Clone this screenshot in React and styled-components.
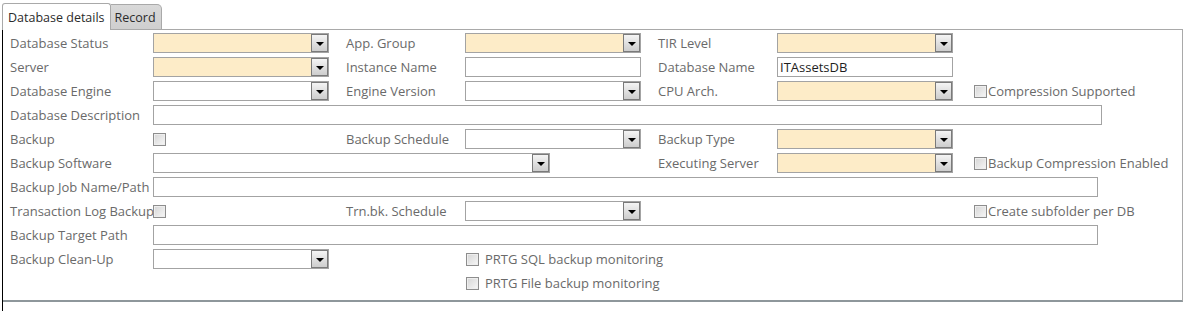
import React from 'react';
import styled, { createGlobalStyle, css } from 'styled-components';

const colors = {
  label: '#6a6a6a',
  text: '#1e1e1e',
  fieldBorder: '#a3a3a3',
  required: '#fdecc8',
  tabBorder: '#a9a9a9',
  panelLine: '#8e979b',
};

const GlobalStyle = createGlobalStyle`
  html, body {
    margin: 0;
    padding: 0;
    background: #fff;
  }
  body {
    font-family: 'Open Sans', 'Noto Sans', sans-serif;
    font-size: 13px;
  }
`;

const Page = styled.div`
  width: 1187px;
  height: 311px;
  overflow: hidden;
  background: #fff;
`;

const TabStrip = styled.div`
  display: flex;
  align-items: flex-end;
  height: 30px;
  margin-left: 2px;
  width: 1181px;
`;

const Tab = styled.div`
  box-sizing: border-box;
  height: 27px;
  padding: 0 5px;
  display: flex;
  align-items: center;
  font-size: 12.5px;
  color: #2b2b2b;
  border: 1px solid ${colors.tabBorder};
  border-bottom: none;
  border-radius: 3px 3px 0 0;
  background: #fff;

  ${props => !props.$active && css`
    height: 26px;
    border-bottom: 1px solid ${colors.tabBorder};
    background: linear-gradient(#d9d9d9, #cfcfcf);
    border-left: none;
    border-radius: 0 5px 0 0;
    padding: 0 5px 0 4px;
  `}
`;

const TabFiller = styled.div`
  flex: 1;
  height: 1px;
  background: ${colors.tabBorder};
`;

const Body = styled.div`
  margin-left: 2px;
  height: 281px;
  border-left: 1px solid #000;
`;

const Panel = styled.div`
  box-sizing: border-box;
  width: 1180px;
  height: 272px;
  border-right: 1px solid ${colors.tabBorder};
  border-bottom: 2px solid ${colors.panelLine};
  padding: 3px 0 0 7px;
`;

const Form = styled.div`
  display: grid;
  grid-template-columns: 143px 193px 119px 193px 119px 197px 1fr;
  grid-auto-rows: 20px;
  row-gap: 4px;
`;

const Label = styled.div`
  grid-column: ${props => props.$col};
  grid-row: ${props => props.$row};
  display: flex;
  align-items: center;
  color: ${colors.label};
  white-space: nowrap;
`;

const Field = styled.div`
  grid-column: ${props => props.$col} / span ${props => props.$span || 1};
  grid-row: ${props => props.$row};
  box-sizing: border-box;
  width: ${props => props.$width || 176}px;
  height: 20px;
  border: 1px solid ${colors.fieldBorder};
  background: ${props => (props.$required ? colors.required : '#fff')};
  display: flex;
  align-items: center;
  padding-left: 2px;
  color: ${colors.text};
  font-size: 13px;
`;

const Value = styled.span`
  flex: 1;
`;

const DropButton = styled.div`
  box-sizing: border-box;
  width: 17px;
  height: 18px;
  border: 1px solid #7a7a7a;
  background: linear-gradient(#f4f4f4, #cdcdcd);
  display: flex;
  align-items: center;
  justify-content: center;
  padding-top: 2px;
`;

const Arrow = styled.div`
  width: 0;
  height: 0;
  border-left: 4px solid transparent;
  border-right: 4px solid transparent;
  border-top: 4px solid #000;
`;

const CheckCell = styled.div`
  grid-column: ${props => props.$col} / span ${props => props.$span || 1};
  grid-row: ${props => props.$row};
  display: flex;
  align-items: center;
  padding-left: ${props => props.$indent || 0}px;
  color: ${colors.label};
  white-space: nowrap;
`;

const Box = styled.div`
  box-sizing: border-box;
  flex: none;
  width: 13px;
  height: 13px;
  border: 1px solid #8d8d8d;
  background: linear-gradient(135deg, #d5d5d5, #f7f7f7);
  box-shadow: inset 0 0 0 1px #eee;
  margin-right: ${props => props.$gap || 0}px;
`;

const Combo = ({ row, col, span, width, required, children }) => (
  <Field $row={row} $col={col} $span={span} $width={width} $required={required}>
    <Value>{children}</Value>
    <DropButton><Arrow /></DropButton>
  </Field>
);

const Text = ({ row, col, span, width, required, children }) => (
  <Field $row={row} $col={col} $span={span} $width={width} $required={required}>
    <Value>{children}</Value>
  </Field>
);

const Check = ({ row, col, span, indent, gap, children }) => (
  <CheckCell $row={row} $col={col} $span={span} $indent={indent}>
    <Box $gap={gap} />
    {children}
  </CheckCell>
);

const App = () => (
  <Page>
    <GlobalStyle />
    <TabStrip>
      <Tab $active>Database details</Tab>
      <Tab>Record</Tab>
      <TabFiller />
    </TabStrip>
    <Body>
      <Panel>
        <Form>
          <Label $row={1} $col={1}>Database Status</Label>
          <Combo row={1} col={2} required />
          <Label $row={1} $col={3}>App. Group</Label>
          <Combo row={1} col={4} required />
          <Label $row={1} $col={5}>TIR Level</Label>
          <Combo row={1} col={6} required />

          <Label $row={2} $col={1}>Server</Label>
          <Combo row={2} col={2} required />
          <Label $row={2} $col={3}>Instance Name</Label>
          <Text row={2} col={4} />
          <Label $row={2} $col={5}>Database Name</Label>
          <Text row={2} col={6}>ITAssetsDB</Text>

          <Label $row={3} $col={1}>Database Engine</Label>
          <Combo row={3} col={2} />
          <Label $row={3} $col={3}>Engine Version</Label>
          <Combo row={3} col={4} />
          <Label $row={3} $col={5}>CPU Arch.</Label>
          <Combo row={3} col={6} required />
          <Check row={3} col={7} gap={1}>Compression Supported</Check>

          <Label $row={4} $col={1}>Database Description</Label>
          <Text row={4} col={2} span={5} width={949} />

          <Label $row={5} $col={1}>Backup</Label>
          <Check row={5} col={2} />
          <Label $row={5} $col={3}>Backup Schedule</Label>
          <Combo row={5} col={4} />
          <Label $row={5} $col={5}>Backup Type</Label>
          <Combo row={5} col={6} required />

          <Label $row={6} $col={1}>Backup Software</Label>
          <Combo row={6} col={2} span={3} width={397} />
          <Label $row={6} $col={5}>Executing Server</Label>
          <Combo row={6} col={6} required />
          <Check row={6} col={7} gap={1}>Backup Compression Enabled</Check>

          <Label $row={7} $col={1}>Backup Job Name/Path</Label>
          <Text row={7} col={2} span={5} width={945} />

          <Label $row={8} $col={1}>Transaction Log Backup</Label>
          <Check row={8} col={2} />
          <Label $row={8} $col={3}>Trn.bk. Schedule</Label>
          <Combo row={8} col={4} />
          <Check row={8} col={7} gap={1}>Create subfolder per DB</Check>

          <Label $row={9} $col={1}>Backup Target Path</Label>
          <Text row={9} col={2} span={5} width={945} />

          <Label $row={10} $col={1}>Backup Clean-Up</Label>
          <Combo row={10} col={2} />
          <Check row={10} col={4} span={2} indent={1} gap={6}>PRTG SQL backup monitoring</Check>

          <Check row={11} col={4} span={2} indent={1} gap={6}>PRTG File backup monitoring</Check>
        </Form>
      </Panel>
    </Body>
  </Page>
);

export default App;
